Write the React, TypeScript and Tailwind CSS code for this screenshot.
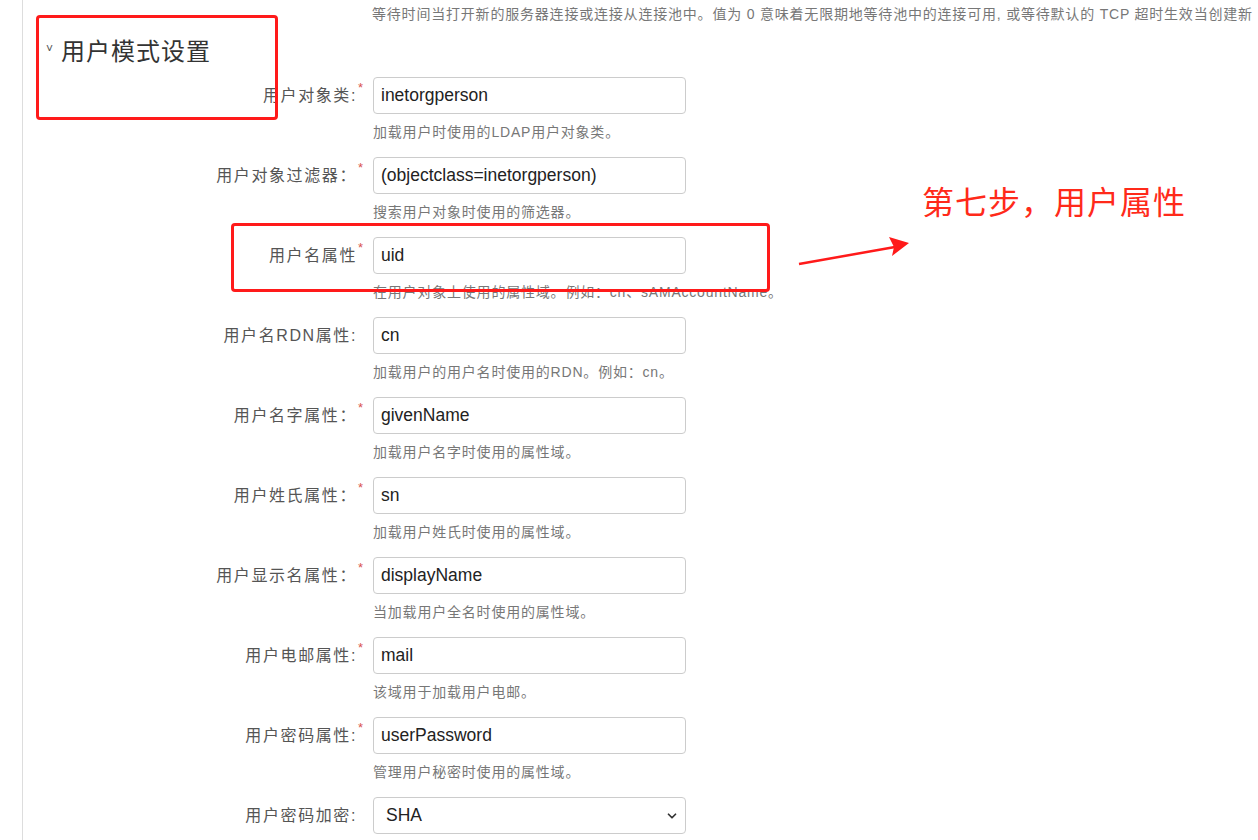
import { ChevronDown } from "lucide-react";

type Field = {
  label: string;
  value: string;
  help?: string;
  req?: boolean;
  select?: boolean;
};

const FIELDS: Field[] = [
  { label: "用户对象类:", value: "inetorgperson", help: "加载用户时使用的LDAP用户对象类。", req: true },
  { label: "用户对象过滤器：", value: "(objectclass=inetorgperson)", help: "搜索用户对象时使用的筛选器。", req: true },
  { label: "用户名属性", value: "uid", help: "在用户对象上使用的属性域。例如：cn、sAMAccountName。", req: true },
  { label: "用户名RDN属性:", value: "cn", help: "加载用户的用户名时使用的RDN。例如：cn。" },
  { label: "用户名字属性：", value: "givenName", help: "加载用户名字时使用的属性域。", req: true },
  { label: "用户姓氏属性：", value: "sn", help: "加载用户姓氏时使用的属性域。", req: true },
  { label: "用户显示名属性：", value: "displayName", help: "当加载用户全名时使用的属性域。", req: true },
  { label: "用户电邮属性:", value: "mail", help: "该域用于加载用户电邮。", req: true },
  { label: "用户密码属性:", value: "userPassword", help: "管理用户秘密时使用的属性域。", req: true },
  { label: "用户密码加密:", value: "SHA", select: true },
];

const font = { fontFamily: '"Liberation Sans", "Noto Sans CJK SC", sans-serif' };

function Row({ f }: { f: Field }) {
  return (
    <div className="shrink-0 flex flex-col pb-[16px]">
      <div className="flex items-center h-[37px]">
        <div className="w-[340px] text-right text-[16px] tracking-[1.6px] text-[#555] leading-[37px] whitespace-pre">
          {f.label}
          <span className={`inline-block w-[6px] align-top text-[13px] leading-[22px] tracking-normal text-[#d9534f] ${f.req ? "" : "invisible"}`}>*</span>
        </div>
        <div className="ml-[10px] w-[313px] h-[37px] border border-[#ccc] rounded-[4px] flex items-center justify-between pl-[7px] pr-[6px] text-[17.5px] text-[#222]">
          <span className={f.select ? "pl-[5px]" : ""}>{f.value}</span>
          {f.select && <ChevronDown size={14} strokeWidth={3} className="text-[#333]" />}
        </div>
      </div>
      {f.help && (
        <div className="ml-[350px] mt-[9px] h-[18px] text-[14px] tracking-[0.8px] leading-[18px] text-[#777] whitespace-nowrap">{f.help}</div>
      )}
    </div>
  );
}

export default function App() {
  return (
    <div className="w-[1258px] h-[840px] overflow-hidden bg-white flex relative" style={font}>
      <div className="w-[23px] shrink-0 border-r border-[#ddd]" />
      <div className="flex-1 min-w-0 flex flex-col">
        <div className="shrink-0 pt-[5px] pl-[349px] h-[24px] text-[14px] tracking-[0.8px] leading-[18px] text-[#777] whitespace-nowrap overflow-hidden">
          等待时间当打开新的服务器连接或连接从连接池中。值为 0 意味着无限期地等待池中的连接可用, 或等待默认的 TCP 超时生效当创建新
        </div>
        <div className="shrink-0 h-[53px] flex items-start pt-[12px] pl-[23px]">
          <span className="text-[12px] leading-[14px] text-[#555] mt-[6px] mr-[8px]">˅</span>
          <span className="text-[24px] tracking-[1px] leading-[32px] text-[#333]">用户模式设置</span>
        </div>
        {FIELDS.map((f) => (
          <Row key={f.label} f={f} />
        ))}
      </div>

      {/* annotations */}
      <div className="absolute left-[36px] top-[15px] w-[242px] h-[105px] border-[3px] border-[#ff1a1a] rounded-[4px]" />
      <div className="absolute left-[231px] top-[223px] w-[539px] h-[69px] border-[3px] border-[#ff1a1a] rounded-[4px]" />
      <svg className="absolute left-[795px] top-[236px]" width="120" height="34" viewBox="0 0 120 34">
        <line x1="4" y1="28" x2="100" y2="11" stroke="#ff1a1a" strokeWidth="2.5" />
        <polygon points="114,7 94,1 99,11 97,20" fill="#ff1a1a" />
      </svg>
      <div className="absolute left-[922px] top-[183px] text-[32px] tracking-[1px] leading-[40px] text-[#ff2a1a] whitespace-nowrap">
        第七步，用户属性
      </div>
    </div>
  );
}
